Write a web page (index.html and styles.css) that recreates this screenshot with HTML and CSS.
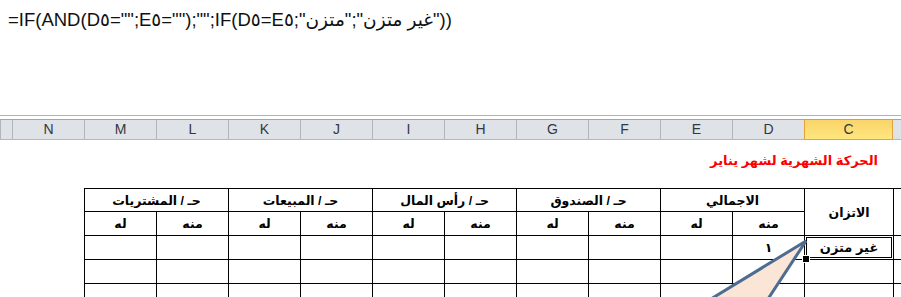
FILE: index.html
```html
<!DOCTYPE html>
<html lang="ar">
<head>
    <meta charset="UTF-8">
    <title>الحركة الشهرية</title>
    <link rel="stylesheet" href="styles.css">
</head>
<body>

    <div class="formula-bar">
        <div class="formula" dir="ltr">=IF(AND(D٥="";E٥="");"";IF(D٥=E٥;"<bdi>متزن</bdi>";"<bdi>غير متزن</bdi>"))</div>
    </div>

    <div class="col-heads">
        <div class="col-head edge"></div>
        <div class="col-head selected">C</div>
        <div class="col-head">D</div>
        <div class="col-head">E</div>
        <div class="col-head">F</div>
        <div class="col-head">G</div>
        <div class="col-head">H</div>
        <div class="col-head">I</div>
        <div class="col-head">J</div>
        <div class="col-head">K</div>
        <div class="col-head">L</div>
        <div class="col-head">M</div>
        <div class="col-head">N</div>
        <div class="col-head"></div>
    </div>

    <div class="sheet">
        <div class="title">الحركة الشهرية لشهر يناير</div>

        <table class="ledger" dir="rtl">
            <colgroup>
                <col class="col-b">
                <col class="col-c">
                <col span="10" class="col-std">
            </colgroup>
            <tr class="head">
                <td rowspan="2"></td>
                <td rowspan="2">الاتزان</td>
                <td colspan="2">الاجمالي</td>
                <td colspan="2">حـ / الصندوق</td>
                <td colspan="2">حـ / رأس المال</td>
                <td colspan="2">حـ / المبيعات</td>
                <td colspan="2">حـ / المشتريات</td>
            </tr>
            <tr class="head">
                <td>منه</td><td>له</td>
                <td>منه</td><td>له</td>
                <td>منه</td><td>له</td>
                <td>منه</td><td>له</td>
                <td>منه</td><td>له</td>
            </tr>
            <tr>
                <td></td>
                <td class="active">غير متزن</td>
                <td class="num">١</td>
                <td></td><td></td><td></td><td></td><td></td><td></td><td></td><td></td><td></td>
            </tr>
            <tr>
                <td></td><td></td><td></td><td></td><td></td><td></td><td></td><td></td><td></td><td></td><td></td><td></td>
            </tr>
            <tr>
                <td></td><td></td><td></td><td></td><td></td><td></td><td></td><td></td><td></td><td></td><td></td><td></td>
            </tr>
        </table>
    </div>

    <svg class="callout" width="901" height="297" viewBox="0 0 901 297">
        <polygon points="806,241 766,302 706,302" fill="#fbe5d6" stroke="#4d6c92" stroke-width="3" stroke-linejoin="miter"/>
    </svg>

</body>
</html>
```

FILE: styles.css
```css
* {
    margin: 0;
    padding: 0;
    box-sizing: border-box;
}

body {
    position: relative;
    width: 901px;
    height: 297px;
    overflow: hidden;
    background: #fff;
    font-family: "Liberation Sans", "DejaVu Sans", sans-serif;
}

.formula-bar {
    height: 116px;
    border-bottom: 1px solid #b4b4b4;
    padding: 8px 0 0 8px;
}

.formula {
    font-size: 18.5px;
    color: #111;
    line-height: 24px;
}

.col-heads {
    direction: rtl;
    display: grid;
    grid-template-columns: 8px 89px repeat(11, 72px) 1fr;
    height: 21px;
    margin-top: 3px;
    background: #dfe3e8;
    border-top: 1px solid #9ea4ab;
    border-bottom: 1px solid #b3b8be;
}

.col-head {
    border-left: 1px solid #b0b5bb;
    text-align: center;
    font-size: 14px;
    line-height: 19px;
    color: #333740;
}

.col-head.edge {
    border-left: none;
}

.col-head.selected {
    background: linear-gradient(#f9d46a, #ffe77e);
    border-left: 1px solid #e2a23c;
    border-right: 1px solid #e2a23c;
    margin-bottom: -1px;
    border-bottom: 1px solid #e2a23c;
}

.sheet {
    overflow: hidden;
}

.title {
    direction: rtl;
    text-align: right;
    padding-right: 23px;
    margin-top: 11px;
    height: 37px;
    color: #ff0000;
    font-weight: bold;
    font-size: 13px;
    line-height: 20px;
}

.ledger {
    margin-left: 84px;
    width: 881px;
    table-layout: fixed;
    border-collapse: collapse;
    font-size: 12.5px;
    font-weight: bold;
    color: #000;
}

.col-b { width: 72px; }
.col-c { width: 89px; }
.col-std { width: 72px; }

.ledger td {
    border: 1px solid #000;
    height: 24px;
    text-align: center;
    vertical-align: middle;
    padding: 0;
}

.ledger tr.head:first-child td {
    height: 23px;
}

.ledger td.active {
    position: relative;
    font-size: 13px;
}

.ledger td.active::before {
    content: "";
    position: absolute;
    inset: -1px;
    border: 3px double #000;
}

.ledger td.active::after {
    content: "";
    position: absolute;
    left: -3px;
    bottom: -4px;
    width: 6px;
    height: 6px;
    background: #000;
    border: 1px solid #fff;
}

.callout {
    position: absolute;
    left: 0;
    top: 0;
    pointer-events: none;
}
```
